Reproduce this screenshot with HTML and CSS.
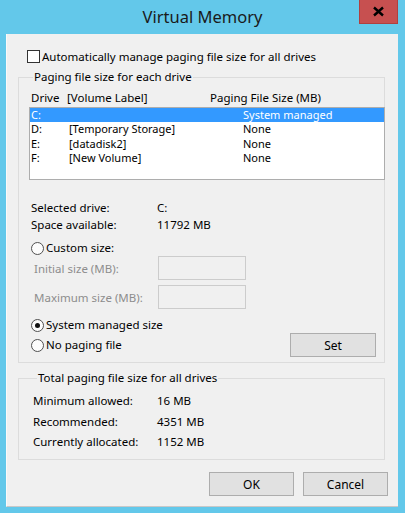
FILE: index.html
```html
<!DOCTYPE html>
<html lang="en">
<head>
    <meta charset="UTF-8">
    <title>Virtual Memory</title>
    <link rel="stylesheet" href="styles.css">
</head>
<body>
    <div class="window">
        <div class="titlebar">
            <span></span>
            <h1 class="title">Virtual Memory</h1>
            <button class="close" type="button">
                <svg width="13" height="11" viewBox="0 0 13 11">
                    <path d="M2 1.5 L11 9.5 M11 1.5 L2 9.5" stroke="#000" stroke-width="2.4" fill="none"/>
                </svg>
            </button>
        </div>

        <div class="client">
            <label class="check-row">
                <span class="checkbox"></span>
                Automatically manage paging file size for all drives
            </label>

            <fieldset class="group group-drives">
                <legend>Paging file size for each drive</legend>

                <div class="list-head">
                    <span class="col-drive">Drive</span>
                    <span class="col-label">[Volume Label]</span>
                    <span class="col-size">Paging File Size (MB)</span>
                </div>
                <div class="listbox">
                    <div class="row selected">
                        <span class="col-drive">C:</span>
                        <span class="col-label"></span>
                        <span class="col-size">System managed</span>
                    </div>
                    <div class="row">
                        <span class="col-drive">D:</span>
                        <span class="col-label">[Temporary Storage]</span>
                        <span class="col-size">None</span>
                    </div>
                    <div class="row">
                        <span class="col-drive">E:</span>
                        <span class="col-label">[datadisk2]</span>
                        <span class="col-size">None</span>
                    </div>
                    <div class="row">
                        <span class="col-drive">F:</span>
                        <span class="col-label">[New Volume]</span>
                        <span class="col-size">None</span>
                    </div>
                </div>

                <div class="info">
                    <span>Selected drive:</span><span>C:</span>
                    <span>Space available:</span><span>11792 MB</span>
                </div>

                <label class="radio-row custom">
                    <span class="radio"></span>Custom size:
                </label>
                <div class="size-field">
                    <span class="disabled">Initial size (MB):</span>
                    <input class="size-input" type="text" disabled>
                </div>
                <div class="size-field">
                    <span class="disabled">Maximum size (MB):</span>
                    <input class="size-input" type="text" disabled>
                </div>

                <label class="radio-row managed">
                    <span class="radio checked"></span>System managed size
                </label>
                <div class="last-row">
                    <label class="radio-row">
                        <span class="radio"></span>No paging file
                    </label>
                    <button class="btn" type="button">Set</button>
                </div>
            </fieldset>

            <fieldset class="group group-total">
                <legend>Total paging file size for all drives</legend>
                <div class="totals">
                    <span>Minimum allowed:</span><span>16 MB</span>
                    <span>Recommended:</span><span>4351 MB</span>
                    <span>Currently allocated:</span><span>1152 MB</span>
                </div>
            </fieldset>

            <div class="actions">
                <button class="btn" type="button">OK</button>
                <button class="btn" type="button">Cancel</button>
            </div>
        </div>
    </div>
</body>
</html>
```

FILE: styles.css
```css
body {
    margin: 0;
    font-family: "Noto Sans", "Open Sans", sans-serif;
    font-size: 11.5px;
    color: #000;
}
.window {
    width: 405px;
    height: 513px;
    background-color: #63c8ea;
    display: flex;
    flex-direction: column;
    box-sizing: border-box;
}
.titlebar {
    height: 34px;
    display: grid;
    grid-template-columns: 1fr auto 1fr;
}
.title {
    margin: 0;
    font-weight: normal;
    font-size: 16.5px;
    line-height: 34px;
    color: #1a1a1a;
}
.close {
    justify-self: end;
    align-self: start;
    width: 39px;
    height: 24px;
    margin-right: 7px;
    padding: 0;
    border: 1px solid #b0403f;
    border-top: none;
    background-color: #c75050;
    display: flex;
    align-items: center;
    justify-content: center;
}
.client {
    flex: 1;
    margin: 0 7px 6px 6px;
    background-color: #f0f0f0;
    border-left: 1px solid #fafafa;
    border-bottom: 1px solid #c8c8c8;
    padding: 16px 13px 0 11px;
    display: flex;
    flex-direction: column;
}
.check-row {
    display: flex;
    align-items: center;
    height: 13px;
    margin-left: 9px;
    gap: 2px;
}
.checkbox {
    width: 11px;
    height: 11px;
    border: 1px solid #333;
    background-color: #fff;
}

/* group boxes */
.group {
    margin: 0;
    border: 1px solid #dcdcdc;
    padding: 0 0 0 10px;
}
.group legend {
    padding: 0 1px;
    margin-left: 4px;
    line-height: 16px;
}
.group-drives {
    margin-top: 6px;
    height: 294px;
    box-sizing: border-box;
}

/* drive list */
.list-head, .row {
    display: flex;
}
.list-head {
    margin-top: 5px;
    padding-left: 2px;
    height: 16px;
    line-height: 16px;
}
.list-head .col-drive { width: 36px; }
.list-head .col-label { width: 143px; }
.row .col-drive { width: 38px; }
.row .col-label { width: 174px; }
.listbox {
    margin-top: 1px;
    margin-right: -1px;
    height: 73px;
    box-sizing: border-box;
    border: 1px solid #adadad;
    background-color: #fff;
}
.row {
    height: 14.5px;
    line-height: 14.5px;
    font-size: 11px;
    padding-left: 1px;
}
.row.selected {
    height: 14px;
    background-color: #3399ff;
    color: #fff;
}

/* selected drive */
.info, .totals {
    display: grid;
    grid-template-columns: 126px auto;
    line-height: 17px;
}
.info {
    margin-top: 19px;
    padding-left: 2px;
}
.radio-row {
    display: flex;
    align-items: center;
    gap: 2px;
    line-height: 16px;
}
.radio {
    width: 11px;
    height: 11px;
    border: 1px solid #505050;
    border-radius: 50%;
    background-color: #fcfcfc;
    margin-left: 2px;
    position: relative;
}
.radio.checked::after {
    content: "";
    position: absolute;
    left: 3px;
    top: 3px;
    width: 5px;
    height: 5px;
    border-radius: 50%;
    background-color: #111;
}
.custom {
    margin-top: 7px;
}
.size-field {
    display: flex;
    align-items: center;
    padding-left: 5px;
}
.size-field + .size-field {
    margin-top: 5px;
}
.disabled {
    color: #8d8d8d;
    width: 124px;
}
.size-input {
    width: 88px;
    height: 24px;
    box-sizing: border-box;
    border: 1px solid #cccccc;
    background-color: #f0f0f0;
    margin: 0;
}
.managed {
    margin-top: 8px;
}
.last-row {
    display: flex;
    justify-content: space-between;
    align-items: center;
    padding-right: 8px;
}

/* buttons */
.btn {
    font-family: inherit;
    font-size: 12px;
    width: 86px;
    height: 24px;
    padding: 0;
    background-color: #e1e1e1;
    border: 1px solid #adadad;
    color: #000;
}

.group-total {
    margin-top: 7px;
    height: 90px;
    box-sizing: border-box;
    padding-left: 14px;
}
.totals {
    margin-top: 5px;
    line-height: 20.5px;
    grid-template-columns: 124px auto;
}
.actions {
    display: flex;
    justify-content: flex-end;
    gap: 9px;
    margin-top: 12px;
    margin-right: -3px;
}
.actions .btn {
    width: 85px;
}
```
